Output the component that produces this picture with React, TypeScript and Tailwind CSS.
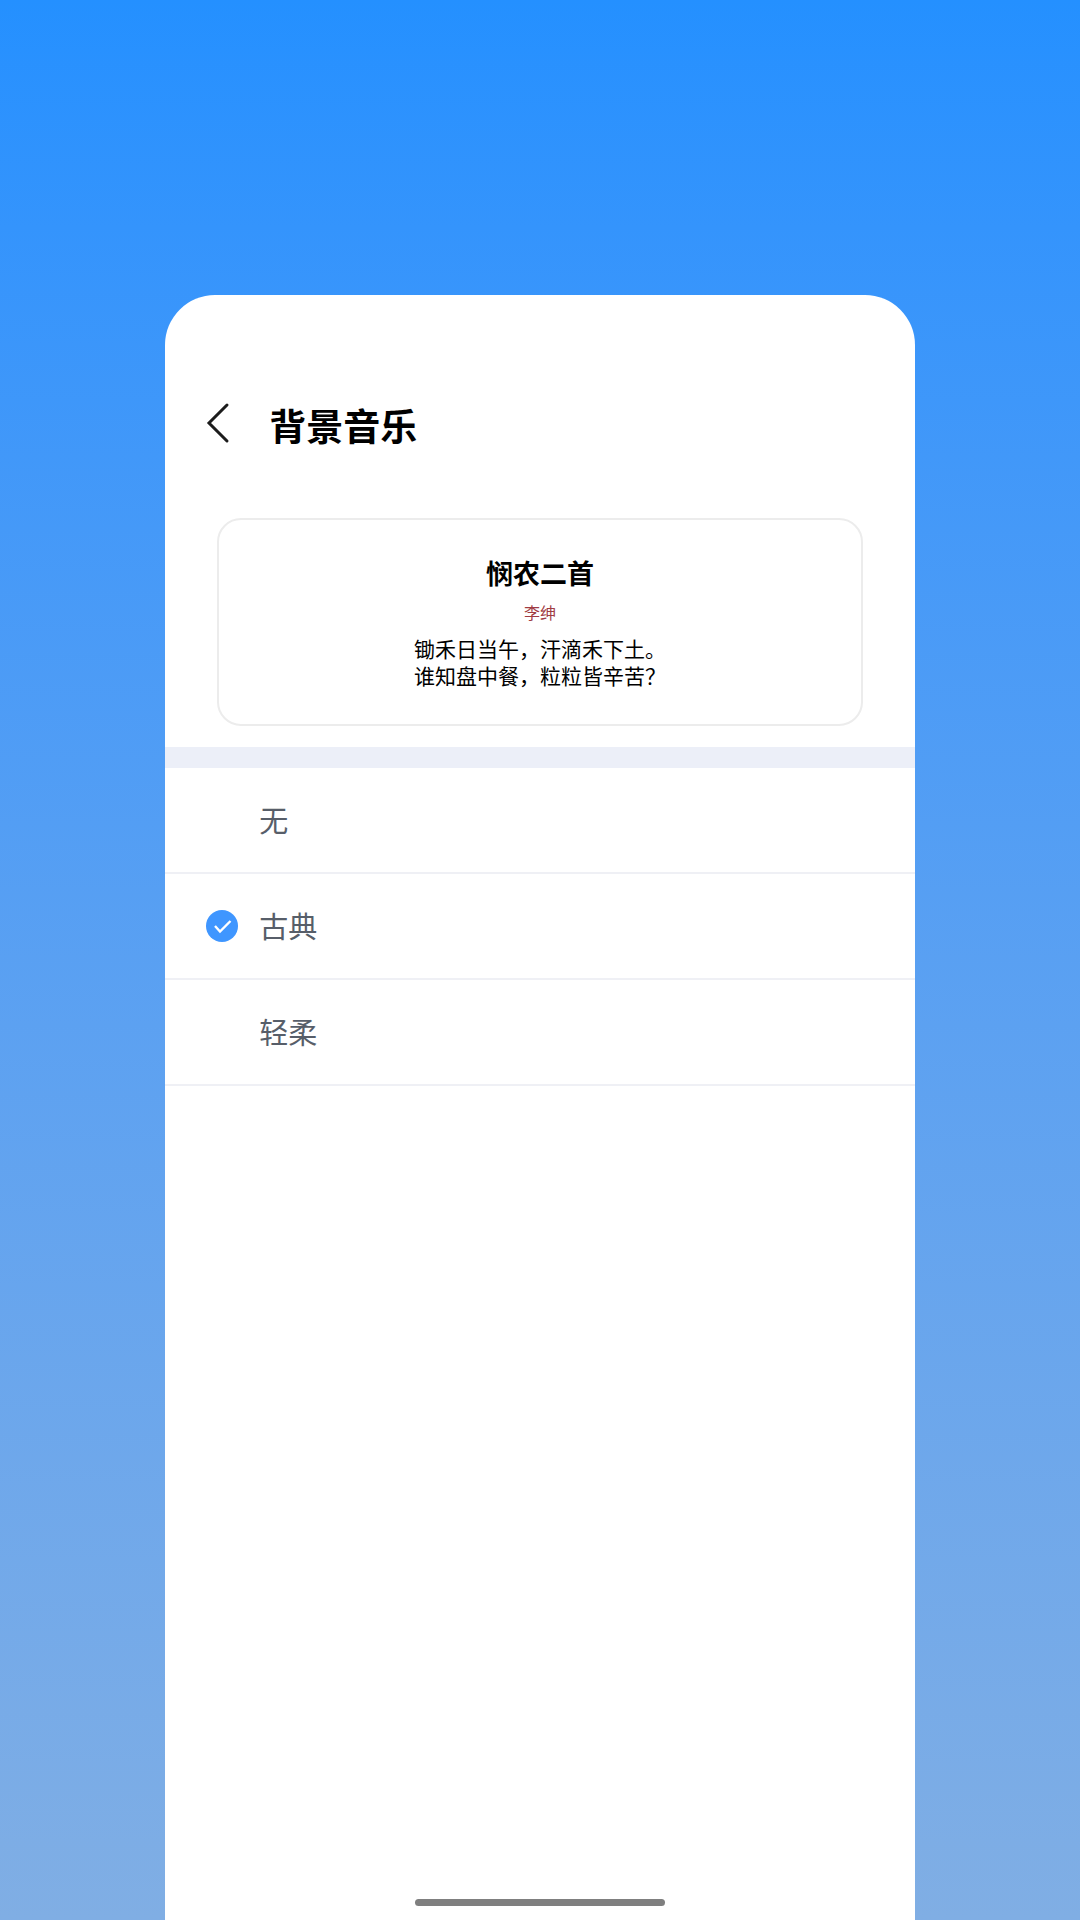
const options = ["无", "古典", "轻柔"];

export default function App() {
  return (
    <div className="flex min-h-screen justify-center bg-linear-to-b from-[#2490ff] to-[#80aee4] px-[15.3%] pt-[295px] font-['Noto_Sans_CJK_SC',sans-serif]">
      <main className="flex w-full flex-col rounded-t-[50px] bg-white pt-[95px]">
        <header className="flex items-center gap-9 px-9">
          <button type="button" aria-label="返回" className="flex h-16 w-8 items-center justify-center text-[#1c1c1c]">
            <svg viewBox="0 0 32 64" className="h-16 w-8" fill="none" stroke="currentColor" strokeWidth="3">
              <path d="M26 12 8 30l18 18" strokeLinecap="round" />
            </svg>
          </button>
          <h1 className="text-[37px] leading-[70px] font-bold text-black">背景音乐</h1>
        </header>
        <section className="mx-[52px] mt-[58px] flex flex-col items-center rounded-[24px] border-2 border-[#ececec] pt-[34px] pb-[35px] text-black">
          <h2 className="text-[27px] leading-[38px] font-bold">悯农二首</h2>
          <p className="mt-2 text-base leading-6 text-[#a03c43]">李绅</p>
          <p className="mt-[11px] text-[21px] leading-[27px]">锄禾日当午，汗滴禾下土。<br />谁知盘中餐，粒粒皆辛苦？</p>
        </section>
        <div className="mt-[21px] h-[21px] bg-[#eceff8]" />
        <fieldset aria-label="背景音乐">
          {options.map((name) => (
            <label key={name} className="flex h-[106px] items-center gap-5 border-b-2 border-[#eff0f5] px-10 text-[29px] text-[#575e69]">
              <input type="radio" name="music" defaultChecked={name === "古典"} className="peer sr-only" />
              <svg viewBox="0 0 34 34" className="invisible size-[34px] peer-checked:visible">
                <circle cx="17" cy="17" r="16" fill="#3f96ff" />
                <path d="m10 17 5 5.5L25.5 12" fill="none" stroke="white" strokeWidth="2.4" />
              </svg>
              <span>{name}</span>
            </label>
          ))}
        </fieldset>
        <div className="mx-auto mt-auto mb-[14px] h-[7px] w-1/3 rounded-full bg-[#7f7f7f]" />
      </main>
    </div>
  );
}
